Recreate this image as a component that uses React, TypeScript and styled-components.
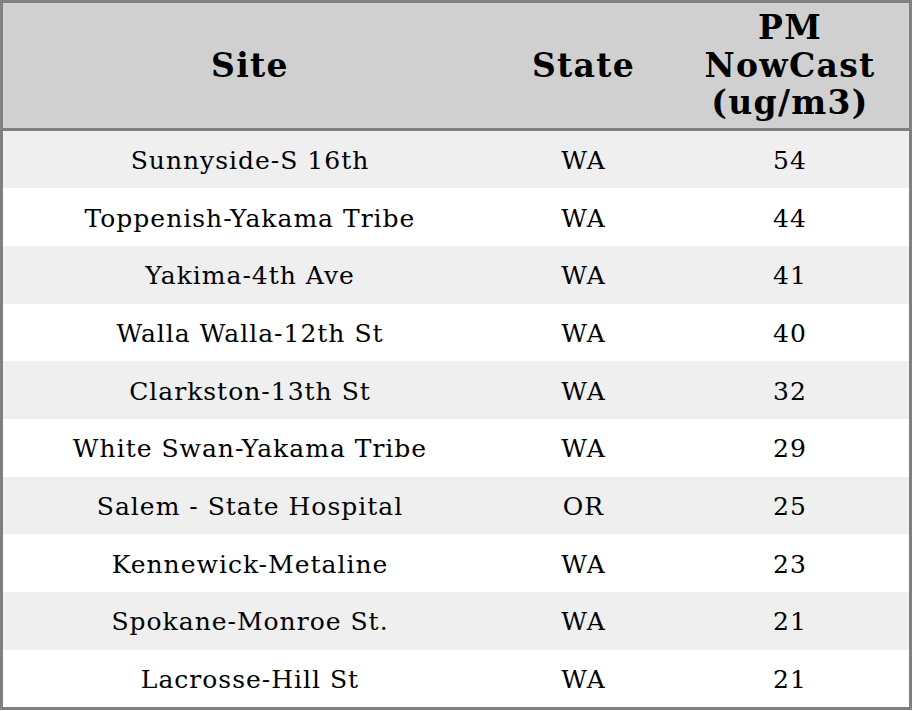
import React from "react";
import styled, { createGlobalStyle } from "styled-components";

const GlobalStyle = createGlobalStyle`
    html, body {
        margin: 0;
        padding: 0;
        background: #ffffff;
    }
`;

const Table = styled.table`
    width: 912px;
    border-collapse: collapse;
    border: 3px solid #808080;
    font-family: "DejaVu Serif", "Liberation Serif", serif;
    color: #000000;
`;

const HeadCell = styled.th<{ $width: number }>`
    width: ${(p) => p.$width}px;
    background-color: #d0d0d0;
    font-size: 33px;
    font-weight: bold;
    letter-spacing: 1.3px;
    line-height: 37.5px;
    text-align: center;
    padding: 6px 4px 6px 5px;
    height: 112.5px;
    box-sizing: content-box;
    border-bottom: 3px solid #808080;
`;

const Row = styled.tr<{ $striped: boolean }>`
    background-color: ${(p) => (p.$striped ? "#efefef" : "#ffffff")};
`;

const Cell = styled.td`
    font-size: 25px;
    letter-spacing: 1px;
    text-align: center;
    padding: 2px 4px 0 5px;
    height: 55.7px;
`;

interface Reading {
    site: string;
    state: string;
    value: number;
}

const readings: Reading[] = [
    { site: "Sunnyside-S 16th", state: "WA", value: 54 },
    { site: "Toppenish-Yakama Tribe", state: "WA", value: 44 },
    { site: "Yakima-4th Ave", state: "WA", value: 41 },
    { site: "Walla Walla-12th St", state: "WA", value: 40 },
    { site: "Clarkston-13th St", state: "WA", value: 32 },
    { site: "White Swan-Yakama Tribe", state: "WA", value: 29 },
    { site: "Salem - State Hospital", state: "OR", value: 25 },
    { site: "Kennewick-Metaline", state: "WA", value: 23 },
    { site: "Spokane-Monroe St.", state: "WA", value: 21 },
    { site: "Lacrosse-Hill St", state: "WA", value: 21 },
];

const App: React.FC = () => {
    return (
        <>
            <GlobalStyle />
            <Table>
                <thead>
                    <tr>
                        <HeadCell $width={484}>Site</HeadCell>
                        <HeadCell $width={165}>State</HeadCell>
                        <HeadCell $width={230}>
                            PM
                            <br />
                            NowCast
                            <br />
                            (ug/m3)
                        </HeadCell>
                    </tr>
                </thead>
                <tbody>
                    {readings.map((r, i) => (
                        <Row key={r.site} $striped={i % 2 === 0}>
                            <Cell>{r.site}</Cell>
                            <Cell>{r.state}</Cell>
                            <Cell>{r.value}</Cell>
                        </Row>
                    ))}
                </tbody>
            </Table>
        </>
    );
};

export default App;
